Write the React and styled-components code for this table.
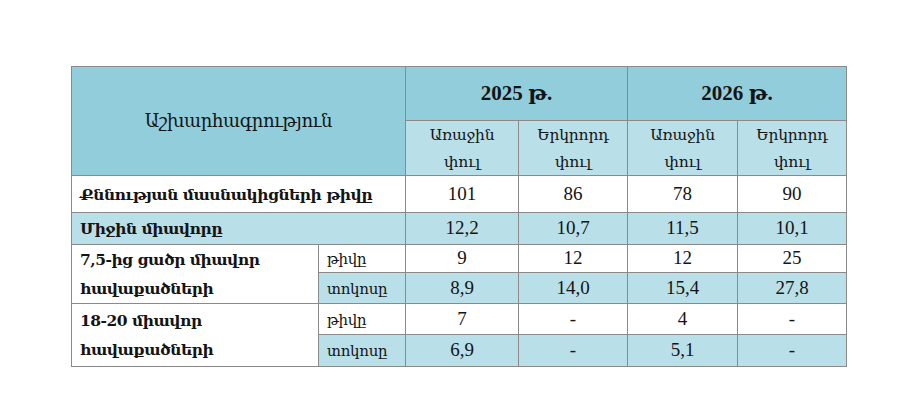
import React from 'react'
import styled, { createGlobalStyle } from 'styled-components'

const GlobalStyle = createGlobalStyle`
    body {
        margin: 0;
        background: #ffffff;
        font-family: "Liberation Serif", "DejaVu Serif", serif;
        color: #141414;
    }
`

const Page = styled.div`
    width: 900px;
    height: 412px;
    padding: 66px 0 0 71px;
    box-sizing: border-box;
`

const Table = styled.table`
    border-collapse: collapse;
    table-layout: fixed;
    width: 775px;
    border: 1.5px solid #7d7d7d;
`

const Cell = styled.td`
    border: 1.5px solid #8a8a8a;
    padding: 0 8px;
    height: ${p => p.h}px;
    box-sizing: border-box;
    text-align: ${p => (p.left ? 'left' : 'center')};
    vertical-align: middle;
    font-size: ${p => p.size || 19}px;
    font-weight: ${p => (p.bold ? 700 : 400)};
    line-height: ${p => p.lh || '1.2'};
    background: ${p =>
        p.tone === 'dark' ? '#92cddc' : p.tone === 'light' ? '#b9dfe9' : '#ffffff'};
`

const Label = styled.span`
    font-family: "DejaVu Serif", serif;
    font-size: ${p => p.size || 15}px;
    letter-spacing: ${p => p.ls ?? -0.3}px;
`

const cols = [247, 87, 113, 109, 110, 109]

const rowsA = [
    { label: 'Քննության մասնակիցների թիվը', vals: ['101', '86', '78', '90'], tone: 'white', h: 37 },
    { label: 'Միջին միավորը', vals: ['12,2', '10,7', '11,5', '10,1'], tone: 'light', h: 32 },
]

const groups = [
    {
        label: ['7,5-ից ցածր միավոր', 'հավաքածների'],
        rows: [
            { sub: 'թիվը', vals: ['9', '12', '12', '25'], tone: 'white', h: 28 },
            { sub: 'տոկոսը', vals: ['8,9', '14,0', '15,4', '27,8'], tone: 'light', h: 31 },
        ],
    },
    {
        label: ['18-20 միավոր', 'հավաքածների'],
        rows: [
            { sub: 'թիվը', vals: ['7', '-', '4', '-'], tone: 'white', h: 31 },
            { sub: 'տոկոսը', vals: ['6,9', '-', '5,1', '-'], tone: 'light', h: 32 },
        ],
    },
]

const App = () => {
    return (
        <Page>
            <GlobalStyle />
            <Table>
                <colgroup>
                    {cols.map((w, i) => (
                        <col key={i} style={{ width: w }} />
                    ))}
                </colgroup>
                <tbody>
                    <tr>
                        <Cell colSpan={2} rowSpan={2} tone="dark" h={54}>
                            <Label size={18} ls={-0.4}>Աշխարհագրություն</Label>
                        </Cell>
                        <Cell colSpan={2} tone="dark" bold size={21} h={54}>2025 թ.</Cell>
                        <Cell colSpan={2} tone="dark" bold size={21} h={54}>2026 թ.</Cell>
                    </tr>
                    <tr>
                        {['Առաջին', 'Երկրորդ', 'Առաջին', 'Երկրորդ'].map((t, i) => (
                            <Cell key={i} tone="light" h={54} lh="25px">
                                <Label size={15.5} ls={-0.2}>{t}<br />փուլ</Label>
                            </Cell>
                        ))}
                    </tr>
                    {rowsA.map((r, i) => (
                        <tr key={i}>
                            <Cell colSpan={2} left bold tone={r.tone} h={r.h}>
                                <Label size={15.5} ls={-0.5}>{r.label}</Label>
                            </Cell>
                            {r.vals.map((v, j) => (
                                <Cell key={j} tone={r.tone} h={r.h}>{v}</Cell>
                            ))}
                        </tr>
                    ))}
                    {groups.map((g, gi) =>
                        g.rows.map((r, ri) => (
                            <tr key={`${gi}-${ri}`}>
                                {ri === 0 && (
                                    <Cell rowSpan={2} left bold lh="28px">
                                        <Label size={15.5} ls={-0.5}>{g.label[0]}<br />{g.label[1]}</Label>
                                    </Cell>
                                )}
                                <Cell left tone={r.tone} h={r.h}>
                                    <Label size={15}>{r.sub}</Label>
                                </Cell>
                                {r.vals.map((v, j) => (
                                    <Cell key={j} tone={r.tone} h={r.h}>{v}</Cell>
                                ))}
                            </tr>
                        ))
                    )}
                </tbody>
            </Table>
        </Page>
    )
}

export default App
